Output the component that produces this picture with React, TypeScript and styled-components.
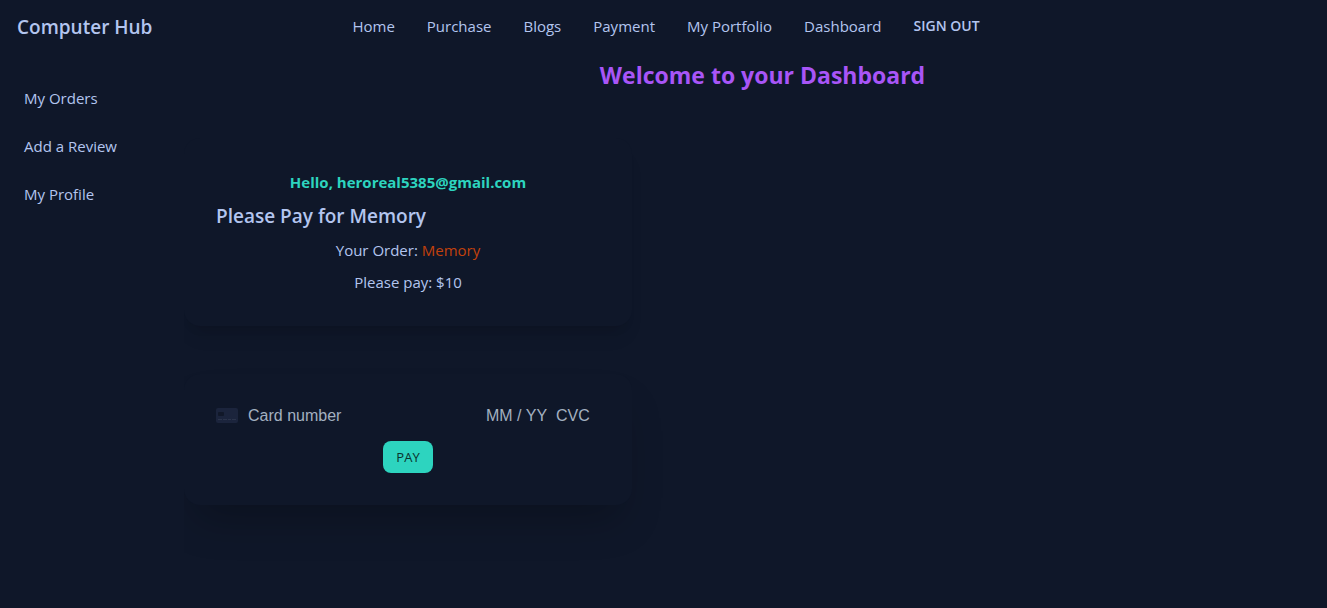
import React from "react";
import styled, { createGlobalStyle } from "styled-components";

const GlobalStyle = createGlobalStyle`
  *, *::before, *::after { box-sizing: border-box; }
  body {
    margin: 0;
    min-height: 100vh;
    background: #0f1729;
    color: #b3c5ef;
    font-family: "Open Sans", "Noto Sans", sans-serif;
    font-size: 15px;
    line-height: 24px;
  }
  h1, h2, p, ul { margin: 0; padding: 0; }
  a { color: inherit; text-decoration: none; }
`;

const Page = styled.div`
  display: flex;
  flex-direction: column;
  min-height: 100vh;
`;

const Navbar = styled.header`
  display: grid;
  grid-template-columns: 1fr auto 1fr;
  align-items: center;
  padding: 0 12px 0 17px;
  height: 52px;
`;

const Brand = styled.a`
  padding-top: 2px;
  font-size: 19px;
  font-weight: 600;
  line-height: 28px;
`;

const Menu = styled.ul`
  display: flex;
  align-items: center;
  gap: 32px;
  list-style: none;
`;

const SignOut = styled.button`
  display: block;
  border: 0;
  padding: 0;
  background: none;
  color: inherit;
  font: inherit;
  font-size: 14px;
  font-weight: 600;
  cursor: pointer;
`;

const Body = styled.div`
  display: flex;
  flex: 1;
`;

const Sidebar = styled.nav`
  flex: 0 0 184px;
  padding: 22px 8px;
`;

const SideList = styled.ul`
  list-style: none;
`;

const SideLink = styled.a`
  display: block;
  padding: 12px 16px;
`;

const Main = styled.main`
  flex: 1;
  min-width: 0;
  overflow: hidden;
  padding-bottom: 64px;
`;

const Title = styled.h1`
  padding: 7px 0 0 14px;
  color: #a855f7;
  font-size: 23px;
  font-weight: 700;
  line-height: 32px;
  text-align: center;
`;

const Cards = styled.div`
  display: flex;
  flex-direction: column;
  gap: 48px;
  max-width: 448px;
  margin-top: 47px;
`;

const Card = styled.section<{ $deep?: boolean }>`
  display: flex;
  flex-direction: column;
  gap: 8px;
  padding: 32px;
  border-radius: 16px;
  background: #0f1729;
  text-align: center;
  box-shadow: ${(p) =>
    p.$deep
      ? "0 25px 40px -12px rgba(0, 0, 0, 0.25)"
      : "0 16px 20px -8px rgba(0, 0, 0, 0.1), 0 8px 10px -6px rgba(0, 0, 0, 0.1)"};
`;

const Greeting = styled.p`
  color: #2dd4bf;
  font-weight: 700;
`;

const CardTitle = styled.h2`
  font-size: 19px;
  font-weight: 600;
  line-height: 28px;
  text-align: left;
`;

const OrderName = styled.span`
  color: #c2410c;
`;

const PayForm = styled.form`
  display: flex;
  flex-direction: column;
  align-items: center;
  gap: 16px;
`;

const CardFields = styled.div`
  display: flex;
  align-items: center;
  width: 100%;
  height: 19px;
`;

const CardInput = styled.input<{ $width?: number }>`
  ${(p) => (p.$width ? `flex: 0 0 ${p.$width}px;` : "flex: 1;")}
  min-width: 0;
  width: 0;
  height: 19px;
  border: 0;
  padding: 0;
  outline: none;
  background: transparent;
  color: #aab7c4;
  font: 16px/19px "Liberation Sans", Arial, sans-serif;
  &::placeholder { color: #a3b0c0; opacity: 1; }
`;

const CardIcon = styled.svg`
  flex: none;
  margin-right: 10px;
`;

const PayButton = styled.button`
  height: 32px;
  padding: 0 13px;
  border: 0;
  border-radius: 8px;
  background: #2dd4bf;
  color: #0b332e;
  font: inherit;
  font-size: 13px;
  font-weight: 500;
  cursor: pointer;
`;

const navLinks = ["Home", "Purchase", "Blogs", "Payment", "My Portfolio", "Dashboard"];
const sideLinks = ["My Orders", "Add a Review", "My Profile"];

export default function App() {
  return (
    <Page>
      <GlobalStyle />
      <Navbar>
        <Brand href="#">Computer Hub</Brand>
        <nav>
          <Menu>
            {navLinks.map((label) => (
              <li key={label}>
                <a href="#">{label}</a>
              </li>
            ))}
            <li>
              <SignOut type="button">SIGN OUT</SignOut>
            </li>
          </Menu>
        </nav>
      </Navbar>
      <Body>
        <Sidebar>
          <SideList>
            {sideLinks.map((label) => (
              <li key={label}>
                <SideLink href="#">{label}</SideLink>
              </li>
            ))}
          </SideList>
        </Sidebar>
        <Main>
          <Title>Welcome to your Dashboard</Title>
          <Cards>
            <Card>
              <Greeting>Hello, heroreal5385@gmail.com</Greeting>
              <CardTitle>Please Pay for Memory</CardTitle>
              <p>
                Your Order: <OrderName>Memory</OrderName>
              </p>
              <p>Please pay: $10</p>
            </Card>
            <Card $deep>
              <PayForm onSubmit={(e) => e.preventDefault()}>
                <CardFields>
                  <CardIcon width="22" height="15" viewBox="0 0 22 15" aria-hidden="true">
                    <rect width="22" height="15" rx="2" fill="#1b243c" />
                    <rect x="2" y="4" width="6" height="4" rx="1" fill="#111829" />
                    <path d="M2 11.500h4m1 0h4m1 0h3m1 0h4" stroke="#2b344b" strokeWidth="1" />
                  </CardIcon>
                  <CardInput aria-label="Card number" placeholder="Card number" />
                  <CardInput $width={70} aria-label="Expiry date" placeholder="MM / YY" />
                  <CardInput $width={44} aria-label="CVC" placeholder="CVC" />
                </CardFields>
                <PayButton type="submit">PAY</PayButton>
              </PayForm>
            </Card>
          </Cards>
        </Main>
      </Body>
    </Page>
  );
}
